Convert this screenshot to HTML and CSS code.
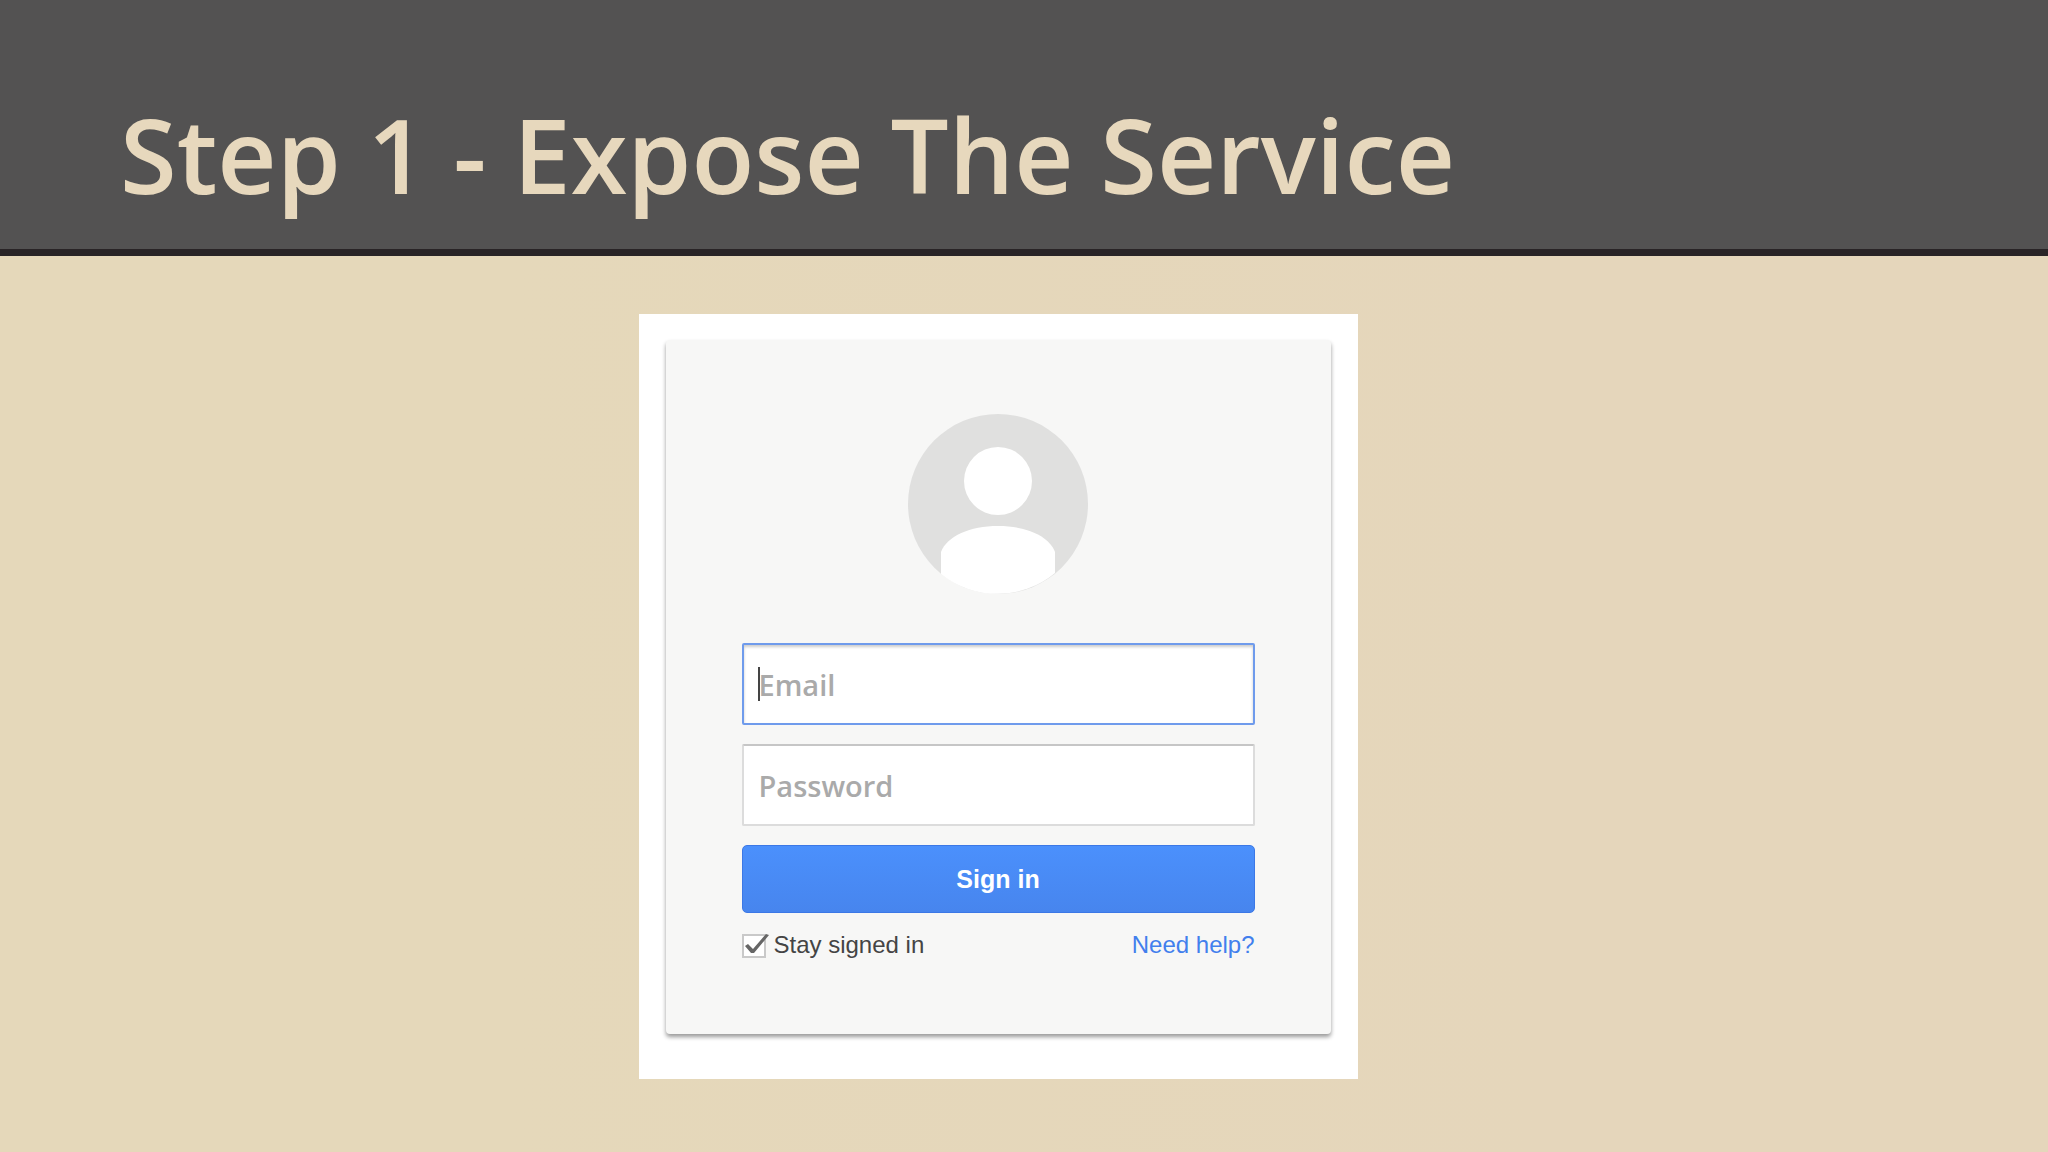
FILE: index.html
```html
<!DOCTYPE html>
<html lang="en">
<head>
  <meta charset="UTF-8">
  <title>Step 1 - Expose The Service</title>
  <meta name="viewport" content="width=device-width, initial-scale=1.0">
  <link rel="stylesheet" href="styles.css">
</head>
<body>
  <header>
    <h1>Step 1 - Expose The Service</h1>
  </header>

  <main>
    <div class="panel">
      <form class="card">
        <!-- avatar -->
        <svg class="avatar" viewBox="0 0 180 180" aria-hidden="true">
          <circle cx="90" cy="90" r="90" fill="#e0e0df"/>
          <circle cx="90" cy="67" r="34" fill="#fff"/>
          <path d="M33 160V138C39 122 62 112 90 112S141 122 147 138V159A90 90 0 0 1 33 160Z" fill="#fff"/>
        </svg>

        <div class="field">
          <input class="active" type="email" placeholder="Email" aria-label="Email">
          <span class="caret"></span>
        </div>
        <div class="field">
          <input type="password" placeholder="Password" aria-label="Password">
        </div>
        <button type="button">Sign in</button>

        <div class="options">
          <label for="stay">
            <span class="check">
              <input type="checkbox" id="stay" checked>
              <svg viewBox="0 0 28 24" aria-hidden="true">
                <path d="M3 12L6 10L11 15L24 0L27 1L12 19H9Z" fill="#666"/>
              </svg>
            </span>
            Stay signed in
          </label>
          <a href="#">Need help?</a>
        </div>
      </form>
    </div>
  </main>
</body>
</html>
```

FILE: styles.css
```css
* { box-sizing: border-box; }
body { margin: 0; min-height: 100vh; font-family: "Liberation Sans", Arial, sans-serif; background: linear-gradient(90deg, #e5d8ba 25%, #e5d6bb 75%); }
header { height: 256px; padding: 86px 120px 0; background: #535252; border-bottom: 7px solid #292426; }
h1 { margin: 0; font: 600 103px/136px "Open Sans", sans-serif; color: #e7d8bd; }
main { display: flex; justify-content: center; padding: 58px 52px 58px 0; }
.panel { width: 100%; max-width: 719px; padding: 26px 27px 45px; background: #fff; }
.card { display: flex; flex-direction: column; padding: 74px 76px; background: #f7f7f6; border-radius: 4px; box-shadow: 0 3px 4px rgba(0, 0, 0, 0.4); }
.avatar { width: 180px; height: 180px; margin: 0 auto 49px; }
.field { position: relative; margin-bottom: 19px; }
.field input { display: block; width: 100%; height: 82px; padding: 0 15px; font: 600 29px "Open Sans", sans-serif; background: #fff; border: 2px solid #dcdcdc; border-top-color: #c6c6c6; border-radius: 2px; outline: none; }
.field input.active { border-color: #6f9bec; box-shadow: inset 0 2px 3px rgba(0, 0, 0, 0.2); }
.field input::placeholder { color: #aaa; opacity: 1; }
.caret { position: absolute; left: 16px; top: 24px; width: 2px; height: 34px; background: #444; }
button { height: 68px; font: bold 25px "Liberation Sans", Arial, sans-serif; color: #fff; background: linear-gradient(#4b90fc, #4785ee); border: 1px solid #3c78e6; border-radius: 5px; }
.options { display: flex; justify-content: space-between; margin-top: 17px; font-size: 24px; line-height: 30px; color: #444; }
.options label { display: flex; gap: 8px; }
.check { position: relative; width: 24px; height: 24px; margin-top: 4px; }
.check input { display: block; appearance: none; width: 24px; height: 24px; margin: 0; background: #fff; border: 2px solid #c9c9c9; }
.check svg { position: absolute; left: 0; top: 0; width: 28px; height: 24px; }
.options a { color: #427fed; text-decoration: none; }
```
